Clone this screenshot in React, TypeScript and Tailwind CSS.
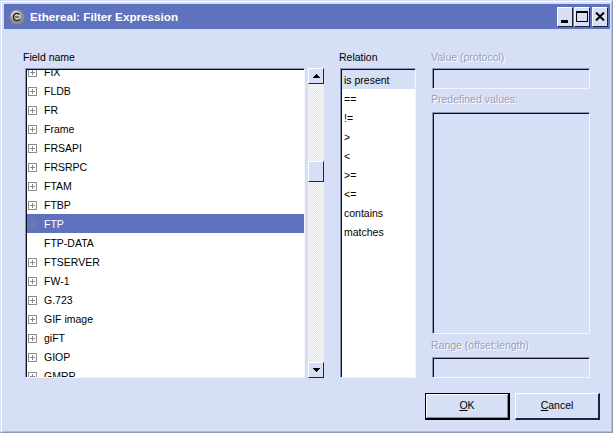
import React from 'react';

const fields: { name: string; plus: boolean; selected?: boolean }[] = [
  { name: 'FIX', plus: true },
  { name: 'FLDB', plus: true },
  { name: 'FR', plus: true },
  { name: 'Frame', plus: true },
  { name: 'FRSAPI', plus: true },
  { name: 'FRSRPC', plus: true },
  { name: 'FTAM', plus: true },
  { name: 'FTBP', plus: true },
  { name: 'FTP', plus: true, selected: true },
  { name: 'FTP-DATA', plus: false },
  { name: 'FTSERVER', plus: true },
  { name: 'FW-1', plus: true },
  { name: 'G.723', plus: true },
  { name: 'GIF image', plus: true },
  { name: 'giFT', plus: true },
  { name: 'GIOP', plus: true },
  { name: 'GMRP', plus: true },
];

const relations = ['is present', '==', '!=', '>', '<', '>=', '<=', 'contains', 'matches'];

function PlusBox({ selected }: { selected?: boolean }) {
  const c = selected ? '#6f7db8' : '#8c8c8c';
  return (
    <svg width="9" height="9" viewBox="0 0 9 9" className="shrink-0" shapeRendering="crispEdges">
      <rect x="0.5" y="0.5" width="8" height="8" fill="none" stroke={c} />
      <path d="M2 4.5H7M4.5 2V7" stroke={c} fill="none" />
    </svg>
  );
}

function CaptionButton({ children, className }: { children: React.ReactNode; className?: string }) {
  return (
    <div
      className={`flex h-[20px] w-[16px] items-center justify-center border-t border-l border-t-white border-l-white border-r border-b border-r-[#1c2440] border-b-[#1c2440] bg-[#d6dff5] ${className ?? ''}`}
    >
      {children}
    </div>
  );
}

function Disabled({ children, className }: { children: React.ReactNode; className?: string }) {
  return (
    <div className={`h-[16px] leading-[16px] text-[#98a0b6] [text-shadow:1px_1px_0_#ffffff] ${className ?? ''}`}>
      {children}
    </div>
  );
}

// grey outer edge, dark inner edge, light right and bottom
function Sunken({ children, className }: { children?: React.ReactNode; className?: string }) {
  return (
    <div
      className={`border-t border-l border-t-[#8b96b8] border-l-[#8b96b8] border-r border-b border-r-[#f2f5fc] border-b-[#f2f5fc] ${className ?? ''}`}
    >
      <div className="h-full overflow-hidden border-t border-l border-t-[#0a0f24] border-l-[#0a0f24]">{children}</div>
    </div>
  );
}

function ScrollArrow({ down }: { down?: boolean }) {
  return (
    <div className="flex h-[16px] w-[16px] shrink-0 items-center justify-center border-t border-l border-t-white border-l-white border-r border-b border-r-[#1c2440] border-b-[#1c2440] bg-[#d6dff5]">
      <svg width="7" height="4" viewBox="0 0 7 4" shapeRendering="crispEdges">
        <path d={down ? 'M0 0H7L3.5 4Z' : 'M3.5 0L7 4H0Z'} fill="#000" />
      </svg>
    </div>
  );
}

export default function App() {
  return (
    <div
      className="h-[433px] w-[613px] overflow-hidden border border-t-[#d6dff5] border-l-[#d6dff5] border-r-[#8f9ab8] border-b-[#8f9ab8] text-[10.5px] text-black"
      style={{ fontFamily: '"Liberation Sans", sans-serif' }}
    >
      <div className="flex h-full flex-col border border-t-white border-l-white border-r-[#b4bdd8] border-b-[#b4bdd8] bg-[#d6dff5] pt-[2px] pl-[2px] pr-[1px]">
        {/* Title bar */}
        <div className="flex h-[25px] shrink-0 items-center bg-[#5f72bd] pl-[5px] pr-[2px]">
          <svg width="16" height="16" viewBox="0 0 16 16" className="shrink-0">
            <circle cx="8" cy="8" r="7.5" fill="#8d8d8d" />
            <circle cx="7" cy="6.5" r="5" fill="#c9c9c9" />
            <path d="M10.5 5.5A3.6 3.6 0 1 0 10.5 10.5" fill="none" stroke="#222" strokeWidth="1.4" />
            <path d="M5.5 8H10" stroke="#222" strokeWidth="1" />
          </svg>
          <div className="ml-[5px] text-[11.7px] font-bold text-white">Ethereal: Filter Expression</div>
          <div className="ml-auto flex items-center">
            <CaptionButton>
              <div className="mt-[9px] -ml-[1px] h-[3px] w-[7px] bg-black" />
            </CaptionButton>
            <CaptionButton className="ml-[1px]">
              <div className="h-[11px] w-[12px] border border-t-2 border-black" />
            </CaptionButton>
            <CaptionButton className="ml-[2px]">
              <svg width="10" height="9" viewBox="0 0 10 9">
                <path d="M1 0.5L9 8.5M9 0.5L1 8.5" stroke="#000" strokeWidth="2" />
              </svg>
            </CaptionButton>
          </div>
        </div>

        {/* Body */}
        <div className="flex min-h-0 flex-1 flex-col pl-[19px]">
          <div className="mt-[20px] flex">
            {/* Field name */}
            <div className="w-[301px] shrink-0">
              <div className="h-[19px] leading-[16px]">Field name</div>
              <div className="ml-[2px] flex h-[310px]">
                <Sunken className="h-full w-[280px] bg-white">
                  <div className="-mt-[8px]">
                    {fields.map((f) => (
                      <div
                        key={f.name}
                        className={`flex h-[19px] items-center pl-[1px] pt-[2px] ${f.selected ? 'bg-[#5f72bd] text-white' : ''}`}
                      >
                        <div className="flex w-[16px] shrink-0 items-center">
                          {f.plus && <PlusBox selected={f.selected} />}
                        </div>
                        <span>{f.name}</span>
                      </div>
                    ))}
                  </div>
                </Sunken>
                <div className="ml-[3px] flex h-full w-[16px] flex-col bg-[repeating-conic-gradient(#d6dff5_0_25%,#ffffff_0_50%)] bg-[length:2px_2px]">
                  <ScrollArrow />
                  <div className="mt-[77px] h-[21px] w-[16px] border-t border-l border-t-white border-l-white border-r border-b border-r-[#1c2440] border-b-[#1c2440] bg-[#d6dff5]" />
                  <div className="flex-1" />
                  <ScrollArrow down />
                </div>
              </div>
            </div>

            {/* Relation */}
            <div className="ml-[15px] w-[77px] shrink-0">
              <div className="h-[19px] leading-[16px]">Relation</div>
              <Sunken className="ml-[1px] h-[310px] bg-white">
                {relations.map((r, i) => (
                  <div key={r} className={`flex h-[19px] items-center pl-[2px] pt-[2px] ${i === 0 ? 'bg-[#d6dff5]' : ''}`}>
                    {r}
                  </div>
                ))}
              </Sunken>
            </div>

            {/* Value */}
            <div className="ml-[15px] flex w-[159px] shrink-0 flex-col">
              <Disabled className="mb-[3px]">Value (protocol)</Disabled>
              <Sunken className="ml-[1px] h-[21px]" />
              <Disabled className="mb-[5px] mt-[2px]">Predefined values:</Disabled>
              <Sunken className="ml-[1px] h-[222px]" />
              <Disabled className="mb-[4px] mt-[3px]">Range (offset:length)</Disabled>
              <Sunken className="ml-[1px] h-[21px]" />
            </div>
          </div>

          {/* Buttons */}
          <div className="mt-[15px] flex justify-end gap-[5px] pr-[10px]">
            <button className="flex h-[27px] w-[85px] items-center justify-center border border-black border-r-2 border-b-2 bg-[#d6dff5] shadow-[inset_1px_1px_0_#fff,inset_-1px_-1px_0_#7d88a8]">
              <span>
                <span className="underline">O</span>K
              </span>
            </button>
            <button className="flex h-[27px] w-[85px] items-center justify-center border-t border-l border-t-white border-l-white border-r-2 border-b-2 border-r-[#1c2440] border-b-[#1c2440] bg-[#d6dff5]">
              <span>
                <span className="underline">C</span>ancel
              </span>
            </button>
          </div>
        </div>
      </div>
    </div>
  );
}
